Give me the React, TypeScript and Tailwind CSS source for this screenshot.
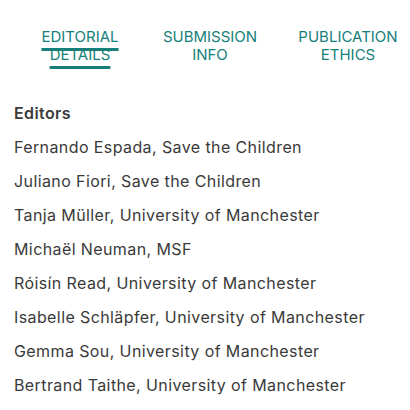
import React from "react";

const editors = [
  "Fernando Espada, Save the Children",
  "Juliano Fiori, Save the Children",
  "Tanja Müller, University of Manchester",
  "Michaël Neuman, MSF",
  "Róisín Read, University of Manchester",
  "Isabelle Schläpfer, University of Manchester",
  "Gemma Sou, University of Manchester",
  "Bertrand Taithe, University of Manchester",
];

export default function App() {
  return (
    <div
      className="w-[410px] h-[410px] bg-white overflow-hidden"
      style={{ fontFamily: "Inter, 'Open Sans', sans-serif" }}
    >
      <div className="flex items-start pt-[28px] text-[15px] leading-[18px] text-[#167f7a] text-center">
        <div className="w-[160px] flex justify-center">
          <span className="underline decoration-[3px] underline-offset-[6px] decoration-[#167f7a] w-[80px]">
            EDITORIAL DETAILS
          </span>
        </div>
        <div className="w-[100px] flex justify-center">
          <span>SUBMISSION INFO</span>
        </div>
        <div className="flex-1 flex justify-center pl-[26px]">
          <span>PUBLICATION ETHICS</span>
        </div>
      </div>
      <div className="pl-[14px] pt-[32px] text-[#3a3a3a] text-[16px] tracking-[0.4px] leading-[34px]">
        <div className="font-semibold">Editors</div>
        {editors.map((e) => (
          <div key={e}>{e}</div>
        ))}
      </div>
    </div>
  );
}
